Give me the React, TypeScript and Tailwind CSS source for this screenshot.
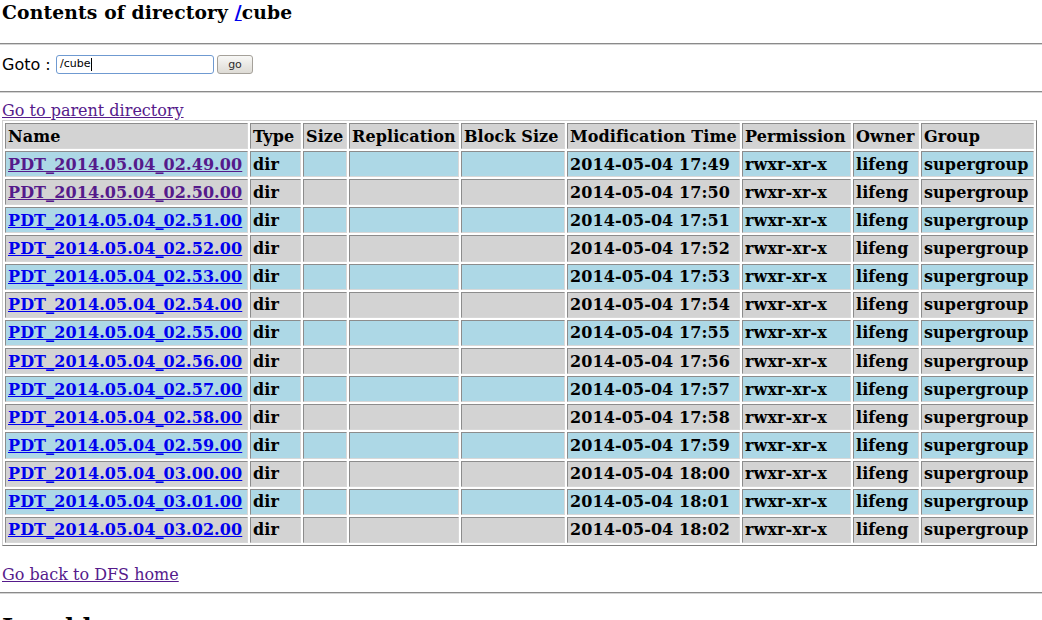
import { memo } from "react";

const serif = "font-['DejaVu_Serif','Liberation_Serif',serif]";
const sans = "font-['DejaVu_Sans','Liberation_Sans',sans-serif]";

const rows = [
  { name: "PDT_2014.05.04_02.49.00", time: "2014-05-04 17:49", visited: true },
  { name: "PDT_2014.05.04_02.50.00", time: "2014-05-04 17:50", visited: true },
  { name: "PDT_2014.05.04_02.51.00", time: "2014-05-04 17:51" },
  { name: "PDT_2014.05.04_02.52.00", time: "2014-05-04 17:52" },
  { name: "PDT_2014.05.04_02.53.00", time: "2014-05-04 17:53" },
  { name: "PDT_2014.05.04_02.54.00", time: "2014-05-04 17:54" },
  { name: "PDT_2014.05.04_02.55.00", time: "2014-05-04 17:55" },
  { name: "PDT_2014.05.04_02.56.00", time: "2014-05-04 17:56" },
  { name: "PDT_2014.05.04_02.57.00", time: "2014-05-04 17:57" },
  { name: "PDT_2014.05.04_02.58.00", time: "2014-05-04 17:58" },
  { name: "PDT_2014.05.04_02.59.00", time: "2014-05-04 17:59" },
  { name: "PDT_2014.05.04_03.00.00", time: "2014-05-04 18:00" },
  { name: "PDT_2014.05.04_03.01.00", time: "2014-05-04 18:01" },
  { name: "PDT_2014.05.04_03.02.00", time: "2014-05-04 18:02" },
];

const cols = [
  { label: "Name", w: "w-[243px]" },
  { label: "Type", w: "w-[51px]" },
  { label: "Size", w: "w-[44px]" },
  { label: "Replication", w: "w-[110px]" },
  { label: "Block Size", w: "w-[104px]" },
  { label: "Modification Time", w: "w-[173px]" },
  { label: "Permission", w: "w-[109px]" },
  { label: "Owner", w: "w-[66px]" },
  { label: "Group", w: "w-[113px]" },
];

const cell =
  "px-[2px] py-0 border border-solid border-t-[#8c8c8c] border-l-[#8c8c8c] border-b-[#d8d8d8] border-r-[#d8d8d8] text-left align-middle whitespace-nowrap overflow-hidden tracking-[0.1px]";

function Rule() {
  return <div className="h-[2px] w-full border-t border-b border-solid border-t-[#8a8a8a] border-b-[#d4d4d4]" />;
}

function App() {
  return (
    <div className={`${serif} text-black bg-white min-h-[620px] w-[1042px] overflow-hidden`}>
      <h3 className="m-0 pl-[2px] pt-[1px] text-[18.72px] font-bold leading-[22px] tracking-[0.15px]">
        Contents of directory <a href="#" className="text-[#0000ee] underline">/</a>cube
      </h3>

      <div className="mt-[20px]">
        <Rule />
      </div>

      <div className={`${sans} mt-[10px] flex items-center h-[19px] pl-[2px] text-[16px]`}>
        <span className="w-[54px]">Goto :</span>
        <div className="h-[19px] w-[158px] rounded-[3px] border border-solid border-[#6f9ad1] bg-white flex items-center pl-[3px] text-[11px]">
          <span>/cube</span>
          <span className="ml-[1px] inline-block h-[13px] w-px bg-black" />
        </div>
        <button className="ml-[3px] h-[19px] w-[36px] rounded-[3px] border border-solid border-[#a5a19a] bg-gradient-to-b from-[#f8f8f6] to-[#dedbd5] text-[11px] text-[#2e2e2e] leading-none">
          go
        </button>
      </div>

      <div className="mt-[17px]">
        <Rule />
      </div>

      <div className="mt-[8px] h-[19px] pl-[2px] text-[16px] leading-[19px]">
        <a href="#" className="text-[#551a8b] underline">Go to parent directory</a>
      </div>

      <table className="mt-0 ml-[2px] table-fixed border-separate border-spacing-[2px] border border-solid border-t-[#d0d0d0] border-l-[#d0d0d0] border-b-[#7c7c7c] border-r-[#7c7c7c] text-[16px] font-bold leading-[19px]">
        <thead>
          <tr>
            {cols.map((c) => (
              <th key={c.label} className={`${cell} ${c.w} h-[26px] bg-[#d3d3d3] font-bold`}>
                {c.label}
              </th>
            ))}
          </tr>
        </thead>
        <tbody>
          {rows.map((r, i) => {
            const bg = i % 2 === 0 ? "bg-[#add8e6]" : "bg-[#d3d3d3]";
            const td = `${cell} ${bg} h-[26.15px]`;
            return (
              <tr key={r.name}>
                <td className={td}>
                  <a href="#" className={`underline ${r.visited ? "text-[#551a8b]" : "text-[#0000ee]"}`}>
                    {r.name}
                  </a>
                </td>
                <td className={td}>dir</td>
                <td className={td}></td>
                <td className={td}></td>
                <td className={td}></td>
                <td className={td}>{r.time}</td>
                <td className={td}>rwxr-xr-x</td>
                <td className={td}>lifeng</td>
                <td className={td}>supergroup</td>
              </tr>
            );
          })}
        </tbody>
      </table>

      <div className="mt-[19px] h-[19px] pl-[2px] text-[16px] leading-[19px]">
        <a href="#" className="text-[#551a8b] underline">Go back to DFS home</a>
      </div>

      <div className="mt-[8px]">
        <Rule />
      </div>

      <h2 className="m-0 mt-[20px] pl-[2px] text-[24px] font-bold leading-[28px]">Local logs</h2>
    </div>
  );
}

export default memo(App);
